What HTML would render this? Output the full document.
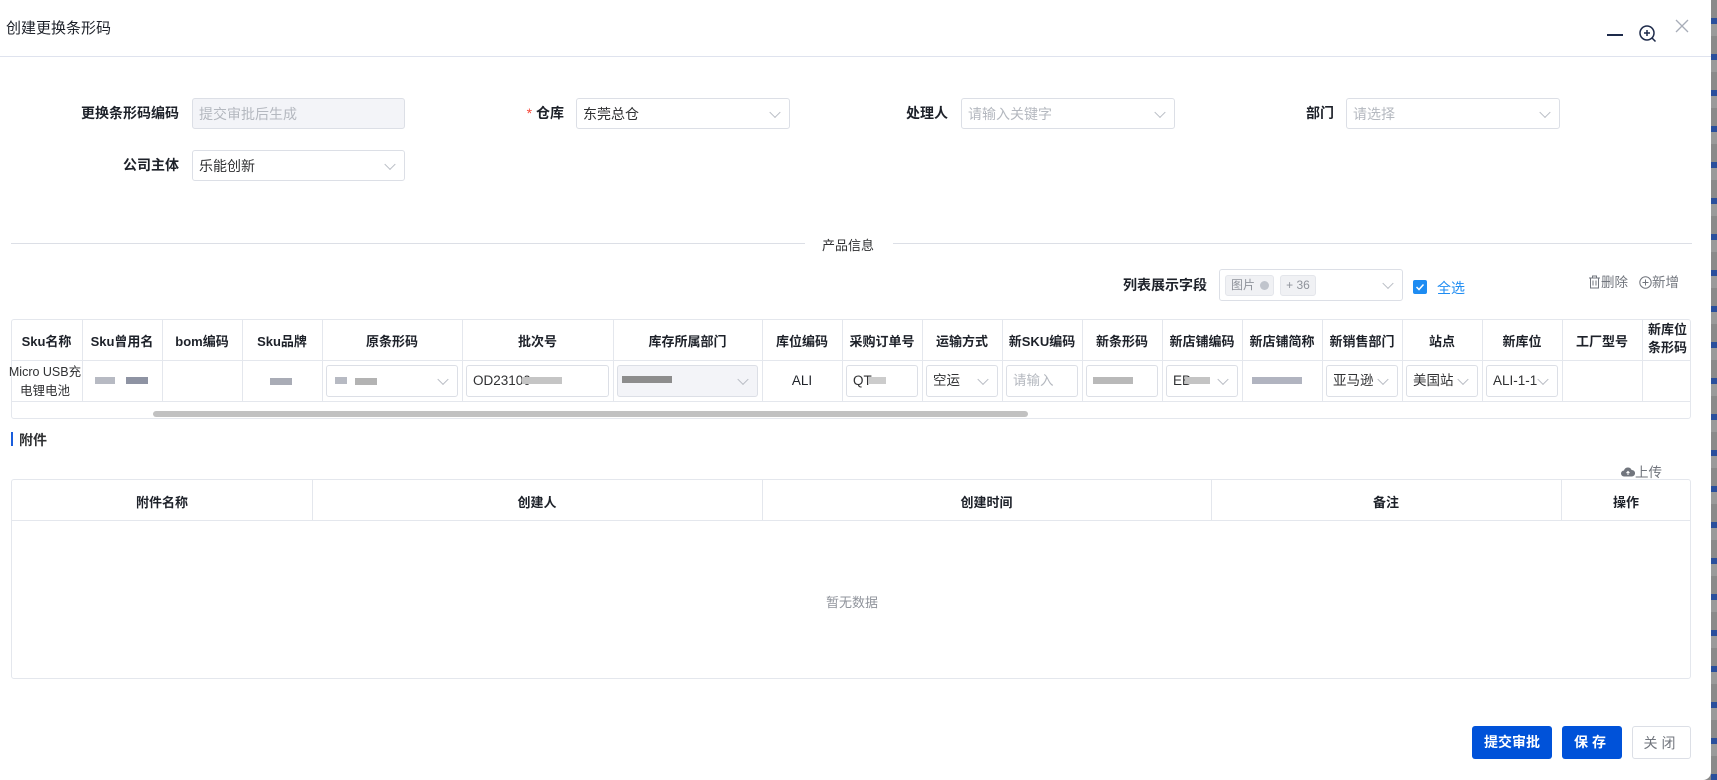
<!DOCTYPE html>
<html><head><meta charset="utf-8">
<style>
*{box-sizing:border-box;margin:0;padding:0}
body{width:1717px;height:780px;overflow:hidden;background:#8a8a8a;font-family:"Liberation Sans","Noto Sans CJK SC",sans-serif;font-size:13px;color:#1f2329;position:relative}
.dlg{position:absolute;left:0;top:0;width:1711px;height:780px;background:#fff;border-radius:0 0 8px 0}
.a{position:absolute}
.lbl{position:absolute;font-weight:bold;font-size:14px;color:#1d2129;text-align:right;line-height:32px}
.inp{position:absolute;border:1px solid #dcdfe6;border-radius:3px;background:#fff;font-size:14px;line-height:30px;padding-left:6px;color:#303133}
.ph{color:#b4b8bf}
.chev{position:absolute;right:10px;top:50%;width:8px;height:8px;border-right:1px solid #b8bcc4;border-bottom:1px solid #b8bcc4;transform:translateY(-70%) rotate(45deg)}
.tbl{position:absolute;border:1px solid #e4e7ed;border-radius:3px}
.vl{position:absolute;top:0;width:1px;background:#e4e7ed}
.th{position:absolute;font-weight:bold;font-size:13px;text-align:center;color:#1d2129}
.blur{position:absolute;background:#c3c6ce}
.btn{position:absolute;border-radius:3px;font-size:14px;text-align:center;line-height:33px;font-weight:bold}
</style></head><body>
<div class="a" style="left:1711px;top:0;width:6px;height:780px;background:repeating-linear-gradient(#8a8a8a 0 18px,#2a4f9c 18px 24px,#9a9a9a 24px 36px)"></div>
<div class="dlg">
<div class="a" style="left:6px;top:17px;font-size:15px;color:#1d2129">创建更换条形码</div>
<div class="a" style="left:0;top:56px;width:1711px;height:1px;background:#dfe3ee"></div>
<div class="a" style="left:1607px;top:34px;width:16px;height:1.5px;background:#1d2a4a"></div>
<svg class="a" style="left:1638px;top:24px" width="20" height="20" viewBox="0 0 20 20"><circle cx="9" cy="9" r="7" fill="none" stroke="#1d2a4a" stroke-width="1.5"/><path d="M9 6v6M6 9h6M14 14l3.5 3.5" stroke="#1d2a4a" stroke-width="1.5"/></svg>
<svg class="a" style="left:1675px;top:19px" width="14" height="14" viewBox="0 0 14 14"><path d="M1 1l12 12M13 1L1 13" stroke="#a8adb8" stroke-width="1.3"/></svg>

<div class="lbl" style="left:40px;top:97px;width:139px">更换条形码编码</div>
<div class="inp ph" style="left:192px;top:98px;width:213px;height:31px;background:#f3f4f8">提交审批后生成</div>
<div class="lbl" style="left:480px;top:97px;width:84px"><span style="color:#f5483b;font-weight:normal">*</span> 仓库</div>
<div class="inp" style="left:576px;top:98px;width:214px;height:31px">东莞总仓<i class="chev"></i></div>
<div class="lbl" style="left:860px;top:97px;width:88px">处理人</div>
<div class="inp ph" style="left:961px;top:98px;width:214px;height:31px">请输入关键字<i class="chev"></i></div>
<div class="lbl" style="left:1250px;top:97px;width:84px">部门</div>
<div class="inp ph" style="left:1346px;top:98px;width:214px;height:31px">请选择<i class="chev"></i></div>
<div class="lbl" style="left:60px;top:149px;width:119px">公司主体</div>
<div class="inp" style="left:192px;top:150px;width:213px;height:31px">乐能创新<i class="chev"></i></div>

<div class="a" style="left:11px;top:243px;width:794px;height:1px;background:#dcdfe6"></div>
<div class="a" style="left:822px;top:235px;font-size:13px;color:#303133">产品信息</div>
<div class="a" style="left:893px;top:243px;width:799px;height:1px;background:#dcdfe6"></div>

<div class="lbl" style="left:1100px;top:269px;width:107px">列表展示字段</div>
<div class="inp" style="left:1219px;top:269px;width:184px;height:32px">
 <span class="a" style="left:5px;top:5px;width:49px;height:21px;background:#f0f1f4;border:1px solid #e4e6eb;border-radius:3px;font-size:12px;line-height:19px;color:#8f939b;padding-left:5px">图片<span class="a" style="right:4px;top:5px;width:9px;height:9px;border-radius:50%;background:#c0c4cc"></span></span>
 <span class="a" style="left:60px;top:5px;width:36px;height:21px;background:#f0f1f4;border:1px solid #e4e6eb;border-radius:3px;font-size:12px;line-height:19px;color:#8f939b;text-align:center">+ 36</span>
 <i class="chev"></i></div>
<div class="a" style="left:1413px;top:280px;width:14px;height:14px;background:#1e8cf2;border-radius:2px"><svg width="14" height="14"><path d="M3.5 7l2.5 2.5 4.5-5" stroke="#fff" stroke-width="1.5" fill="none"/></svg></div>
<div class="a" style="left:1437px;top:278px;font-size:14px;color:#1e8cf2">全选</div>
<div class="a" style="left:1588px;top:271px;font-size:13.5px;color:#71757d"><svg width="13" height="14" style="vertical-align:-2px" viewBox="0 0 13 14"><path d="M1 3h11M4.5 3V1h4v2M2.5 3v10h8V3M5 5.5v5M8 5.5v5" stroke="#71757d" fill="none"/></svg>删除</div>
<div class="a" style="left:1639px;top:271px;font-size:13.5px;color:#71757d"><svg width="13" height="13" style="vertical-align:-2px" viewBox="0 0 13 13"><circle cx="6.5" cy="6.5" r="5.7" stroke="#71757d" fill="none"/><path d="M6.5 3.5v6M3.5 6.5h6" stroke="#71757d"/></svg>新增</div>

<div class="tbl" style="left:11px;top:319px;width:1680px;height:100px;overflow:hidden">
 <div class="a" style="left:0;top:40px;width:1680px;height:1px;background:#e4e7ed"></div>
 <div class="a" style="left:0;top:81px;width:1680px;height:1px;background:#e4e7ed"></div>
 <div class="a" style="left:141px;top:91px;width:875px;height:6px;border-radius:3px;background:#c1c1c1"></div>
</div>
<div id="cols"></div>

<div class="a" style="left:11px;top:432px;width:2px;height:14px;background:#1a5ddc"></div>
<div class="a" style="left:19px;top:430px;font-size:14px;font-weight:bold;color:#303133">附件</div>
<div class="a" style="left:1621px;top:461px;font-size:13.5px;color:#71757d"><svg width="14" height="12" style="vertical-align:-1px" viewBox="0 0 14 12"><path d="M3.5 10.5H3a3 3 0 0 1 0-6 4 4 0 0 1 7.6-.5A3 3 0 0 1 11 10.5h-.5z" fill="#71757d"/><path d="M7 9V5.5M5.5 7L7 5.5 8.5 7" stroke="#fff" fill="none"/></svg>上传</div>
<div class="tbl" style="left:11px;top:479px;width:1680px;height:200px">
 <div class="a" style="left:0;top:40px;width:1678px;height:1px;background:#e4e7ed"></div>
 <div class="vl" style="left:300px;height:40px"></div><div class="vl" style="left:750px;height:40px"></div><div class="vl" style="left:1199px;height:40px"></div><div class="vl" style="left:1549px;height:40px"></div>
 <div class="th" style="left:0;width:300px;top:12px">附件名称</div>
 <div class="th" style="left:300px;width:450px;top:12px">创建人</div>
 <div class="th" style="left:750px;width:449px;top:12px">创建时间</div>
 <div class="th" style="left:1199px;width:350px;top:12px">备注</div>
 <div class="th" style="left:1549px;width:130px;top:12px">操作</div>
 <div class="a" style="left:0;width:1680px;top:112px;text-align:center;color:#8f939b;font-size:13px">暂无数据</div>
</div>

<div class="btn" style="left:1472px;top:726px;width:80px;height:33px;background:#0052d9;color:#fff">提交审批</div>
<div class="btn" style="left:1562px;top:726px;width:60px;height:33px;background:#0052d9;color:#fff;letter-spacing:4px">保存</div>
<div class="btn" style="left:1632px;top:726px;width:59px;height:33px;border:1px solid #dcdfe6;color:#71757d;font-weight:normal;letter-spacing:4px">关闭</div>
</div>
<script>
var b=[11,82,162,242,322,462,613,762,842,922,1002,1082,1162,1242,1322,1402,1482,1562,1642,1690];
var h=["Sku名称","Sku曾用名","bom编码","Sku品牌","原条形码","批次号","库存所属部门","库位编码","采购订单号","运输方式","新SKU编码","新条形码","新店铺编码","新店铺简称","新销售部门","站点","新库位","工厂型号","新库位<br>条形码"];
var s="";
for(var i=0;i<19;i++){var x=b[i],w=b[i+1]-x;
 if(i>0)s+='<div class="vl" style="left:'+x+'px;top:319px;height:82px"></div>';
 var t=i==18?'top:321px;text-align:left;padding-left:6px;line-height:18px;white-space:nowrap;overflow:hidden':'top:331px';
 s+='<div class="th" style="left:'+x+'px;width:'+w+'px;'+t+'">'+h[i]+'</div>';}
function inp(i,txt,sel,dis,ph){var x=b[i]+4,w=b[i+1]-b[i]-8;return '<div class="inp'+(ph?' ph':'')+'" style="left:'+x+'px;top:365px;width:'+w+'px;height:32px;font-size:13.5px;padding-left:6px;white-space:nowrap;overflow:hidden;'+(dis?'background:#f3f4f8;':'')+'">'+txt+(sel?'<i class="chev"></i>':'')+'</div>';}
function bl(x,y,w,c){return '<div class="blur" style="left:'+x+'px;top:'+y+'px;width:'+w+'px;height:7px;background:'+(c||'#b7bac3')+'"></div>';}
s+='<div class="a" style="left:8px;top:363px;width:74px;text-align:center;font-size:12.5px;line-height:19px;color:#303133;white-space:nowrap;overflow:hidden">Micro USB充<br>电锂电池</div>';
s+=bl(95,377,20)+bl(126,377,22,'#8e93a3');
s+=bl(270,378,22,'#a9acb6');
s+=inp(4,'',1)+bl(335,377,12)+bl(355,378,22,'#b3b3b3');
s+=inp(5,'OD23100',0)+bl(522,377,40,'#c5c5c5');
s+=inp(6,'',1,1)+bl(622,376,50,'#8d8d8d');
s+='<div class="a" style="left:762px;width:80px;top:373px;text-align:center;font-size:13.5px">ALI</div>';
s+=inp(8,'QT',0)+bl(868,377,18,'#cccccc');
s+=inp(9,'空运',1);
s+=inp(10,'请输入',0,0,1);
s+=inp(11,'',0)+bl(1093,377,40,'#b9b9b9');
s+=inp(12,'EB',1)+bl(1185,377,25,'#c4c4c4');
s+=bl(1252,377,50,'#b1b4c0');
s+=inp(14,'亚马逊',1);
s+=inp(15,'美国站',1);
s+=inp(16,'ALI-1-1',1);
document.getElementById('cols').outerHTML=s;
</script>
</body></html>
